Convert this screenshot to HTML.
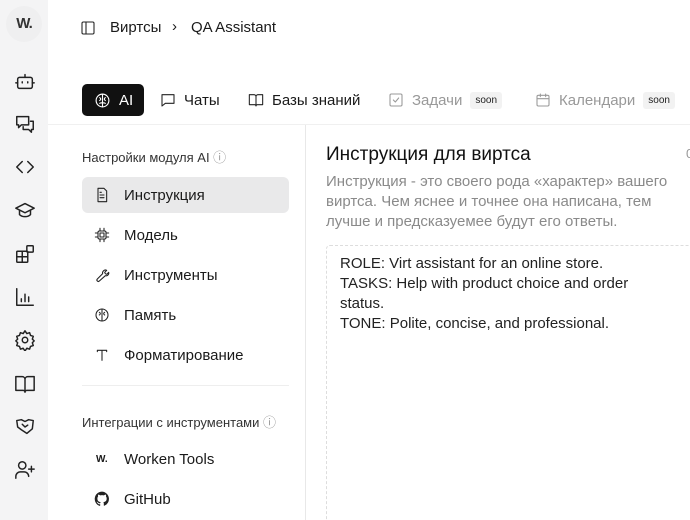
<!DOCTYPE html><html><head><meta charset="utf-8"><style>
*{box-sizing:border-box;margin:0;padding:0}
html,body{width:690px;height:520px;overflow:hidden}
body{background:#fff;font-family:"Liberation Sans",sans-serif;color:#1a1a1a;position:relative}
.side{position:absolute;left:0;top:0;width:48px;height:520px;background:#f4f4f5}
.logo{position:absolute;left:6px;top:6px;width:36px;height:36px;border-radius:50%;background:#efeff0;font-weight:bold;font-size:15px;text-align:center;line-height:36px;color:#333;letter-spacing:-1px}
.si{position:absolute;left:14px;width:22px;height:22px}
svg{fill:none;stroke:#222;stroke-width:1.6;stroke-linecap:round;stroke-linejoin:round}
.a{position:absolute;white-space:nowrap}
.tab{position:absolute;top:84px;height:32px;display:flex;align-items:center;font-size:15px;gap:8px}
.soon{font-size:10px;background:#f2f2f2;padding:3px 5px;border-radius:3px;color:#222}
.item{position:absolute;left:82px;width:207px;height:36px;border-radius:6px;display:flex;align-items:center;font-size:15px}
.item svg{position:absolute;left:12px;width:16px;height:16px}
.item span{position:absolute;left:42px}
</style></head><body>
<div class="side"><div class="logo">W.</div>
<svg class="si" style="top:70px" viewBox="0 0 24 24"><rect x="4" y="8" width="16" height="12" rx="2"/><path d="M12 8V5M9 13v1M15 13v1M2 14h2M20 14h2"/></svg>
<svg class="si" style="top:113px" viewBox="0 0 24 24"><path d="M3 4h13v9H8l-3 3v-3H3zM18 9h3v9h-2v3l-3-3h-6v-3"/></svg>
<svg class="si" style="top:156px" viewBox="0 0 24 24"><path d="M9 6l-6 6 6 6M15 6l6 6-6 6"/></svg>
<svg class="si" style="top:199px" viewBox="0 0 24 24"><path d="M2 10l10-5 10 5-10 5zM6 12v5c3 3 9 3 12 0v-5"/></svg>
<svg class="si" style="top:243px" viewBox="0 0 24 24"><rect x="3" y="9" width="12" height="12" rx="1"/><path d="M9 9v12M3 15h12"/><rect x="14" y="3" width="7" height="7" rx="1"/></svg>
<svg class="si" style="top:286px" viewBox="0 0 24 24"><path d="M3 3v18h18M8 17v-3M12 17V9M16 17v-5"/></svg>
<svg class="si" style="top:329px" viewBox="0 0 24 24"><circle cx="12" cy="12" r="3"/><path d="M12 2l2 3 3-1 1 3 3 1-1 3 2 2-2 2 1 3-3 1-1 3-3-1-2 3-2-3-3 1-1-3-3-1 1-3-2-2 2-2-1-3 3-1 1-3 3 1z"/></svg>
<svg class="si" style="top:373px" viewBox="0 0 24 24"><path d="M2 4h7a3 3 0 013 3v14a2 2 0 00-2-2H2zM22 4h-7a3 3 0 00-3 3v14a2 2 0 012-2h8z"/></svg>
<svg class="si" style="top:416px" viewBox="0 0 24 24"><path d="M3 5l5-1 4 2 4-2 5 1-1 9-6 5-6-4-4-3zM9 9l3 3 3-2"/></svg>
<svg class="si" style="top:459px" viewBox="0 0 24 24"><circle cx="9" cy="7" r="4"/><path d="M2 21v-2a5 5 0 015-5h4a5 5 0 015 5M19 8v6M16 11h6"/></svg>
</div>
<svg class="a" style="left:80px;top:20px;width:16px;height:16px" viewBox="0 0 24 24"><rect x="3" y="3" width="18" height="18" rx="2"/><path d="M9 3v18"/></svg>
<div class="a" style="left:110px;top:19px;font-size:15px">Виртсы</div>
<div class="a" style="left:172px;top:18px;font-size:15px">›</div>
<div class="a" style="left:191px;top:19px;font-size:15px">QA Assistant</div>
<div class="tab" style="left:82px;width:62px;background:#111;color:#fff;border-radius:5px;padding-left:12px"><svg style="width:17px;height:17px;stroke:#fff" viewBox="0 0 24 24"><circle cx="12" cy="12" r="9"/><path d="M12 3v18M8 8c2 1 2 3 0 4M16 8c-2 1-2 3 0 4M8 16c2-1 3-1 4 0M16 16c-2-1-3-1-4 0"/></svg>AI</div>
<div class="tab" style="left:160px"><svg style="width:16px;height:16px" viewBox="0 0 24 24"><path d="M3 4h18v13H8l-5 4z"/></svg>Чаты</div>
<div class="tab" style="left:248px"><svg style="width:16px;height:16px" viewBox="0 0 24 24"><path d="M2 4h7a3 3 0 013 3v14a2 2 0 00-2-2H2zM22 4h-7a3 3 0 00-3 3v14a2 2 0 012-2h8z"/></svg>Базы знаний</div>
<div class="tab" style="left:388px;color:#999"><svg style="width:16px;height:16px;stroke:#999" viewBox="0 0 24 24"><rect x="3" y="3" width="18" height="18" rx="2"/><path d="M8 12l3 3 5-6"/></svg>Задачи <span class="soon">soon</span></div>
<div class="tab" style="left:535px;color:#999"><svg style="width:16px;height:16px;stroke:#999" viewBox="0 0 24 24"><rect x="3" y="5" width="18" height="16" rx="2"/><path d="M3 10h18M8 3v4M16 3v4"/></svg>Календари <span class="soon">soon</span></div>
<div class="a" style="left:48px;top:124px;width:642px;height:1px;background:#f0f0f0"></div>
<div class="a" style="left:305px;top:125px;width:1px;height:395px;background:#e8e8e8"></div>
<div class="a" style="left:82px;top:147px;font-size:13px;color:#333">Настройки модуля AI <span style="color:#999">ⓘ</span></div>
<div class="item" style="top:177px;background:#e9e9ea"><svg viewBox="0 0 24 24"><path d="M6 2h9l4 4v16H6zM9 12h6M9 16h6M9 8h2"/></svg><span>Инструкция</span></div>
<div class="item" style="top:217px"><svg viewBox="0 0 24 24"><rect x="6" y="6" width="12" height="12" rx="2"/><rect x="9" y="9" width="6" height="6"/><path d="M9 2v4M15 2v4M9 18v4M15 18v4M2 9h4M2 15h4M18 9h4M18 15h4"/></svg><span>Модель</span></div>
<div class="item" style="top:257px"><svg viewBox="0 0 24 24"><path d="M14 6a4 4 0 015-1l-3 3 1 2 2 1 3-3a4 4 0 01-5 5L8 21a2 2 0 01-3-3l8-8a4 4 0 011-4z"/></svg><span>Инструменты</span></div>
<div class="item" style="top:297px"><svg viewBox="0 0 24 24"><circle cx="12" cy="12" r="9"/><path d="M12 3v18M8 8c2 1 2 3 0 4M16 8c-2 1-2 3 0 4"/></svg><span>Память</span></div>
<div class="item" style="top:337px"><svg viewBox="0 0 24 24"><path d="M5 5h14M12 5v15M5 5v2M19 5v2"/></svg><span>Форматирование</span></div>
<div class="a" style="left:82px;top:385px;width:207px;height:1px;background:#eee"></div>
<div class="a" style="left:82px;top:412px;font-size:13px;color:#333">Интеграции с инструментами <span style="color:#999">ⓘ</span></div>
<div class="item" style="top:441px"><b style="position:absolute;left:14px;font-size:10px">W.</b><span>Worken Tools</span></div>
<div class="item" style="top:481px"><svg viewBox="0 0 24 24" style="fill:#222;stroke:none"><path d="M12 1a11 11 0 00-3.5 21.4c.6.1.8-.2.8-.6v-2c-3 .7-3.700-1.4-3.7-1.4-.5-1.3-1.2-1.6-1.2-1.6-1-.7.1-.7.1-.7 1.1.1 1.7 1.1 1.7 1.1 1 1.7 2.6 1.2 3.2.9.1-.7.4-1.2.7-1.5-2.4-.3-5-1.2-5-5.4 0-1.2.4-2.2 1.1-2.9-.1-.3-.5-1.4.1-2.9 0 0 .9-.3 3 1.100a10 10 0 015.5 0c2.1-1.4 3-1.1 3-1.1.6 1.5.2 2.6.1 2.9.7.7 1.1 1.7 1.1 2.9 0 4.2-2.6 5.1-5 5.4.4.3.7 1 .7 2v3c0 .3.2.7.8.6A11 11 0 0012 1z"/></svg><span>GitHub</span></div>
<div class="a" style="left:326px;top:144px;font-size:19px;color:#111">Инструкция для виртса</div>
<div class="a" style="left:686px;top:146px;font-size:13px;color:#999">0</div>
<div class="a" style="left:326px;top:172px;font-size:15px;color:#8a8a8a;line-height:20px;white-space:normal;width:358px">Инструкция - это своего рода «характер» вашего виртса. Чем яснее и точнее она написана, тем лучше и предсказуемее будут его ответы.</div>
<div class="a" style="left:326px;top:245px;width:380px;height:290px;border:1.5px dashed #ddd;border-radius:4px"></div>
<div class="a" style="left:340px;top:254px;font-size:15px;line-height:20px;color:#222;white-space:normal;width:310px">ROLE: Virt assistant for an online store.<br>TASKS: Help with product choice and order status.<br>TONE: Polite, concise, and professional.</div>
</body></html>
